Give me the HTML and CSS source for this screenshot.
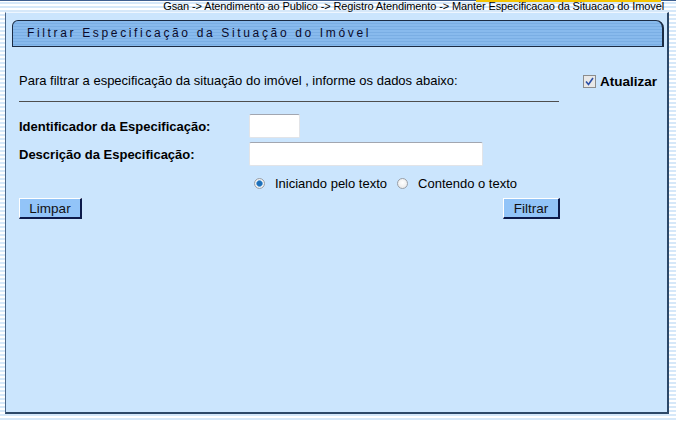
FILE: index.html
```html
<!DOCTYPE html>
<html lang="pt">
<head>
<meta charset="utf-8">
<title>Filtrar Especificação da Situação do Imóvel</title>
<link rel="stylesheet" href="styles.css">
</head>
<body>
<div class="header">
  <span class="crumb">Gsan -&gt; Atendimento ao Publico -&gt; Registro Atendimento -&gt; Manter Especificacao da Situacao do Imovel</span>
</div>
<div class="panel">
  <div class="titlebar">Filtrar Especificação da Situação do Imóvel</div>
  <div class="form">
    <div class="intro">
      <span class="intro-text">Para filtrar a especificação da situação do imóvel , informe os dados abaixo:</span>
      <label class="update">
        <span class="check">
          <svg width="9" height="9" viewBox="0 0 9 9"><path d="M1 4.5 L3.5 7.5 L8 1" fill="none" stroke="#2a4fa8" stroke-width="1.6"/></svg>
        </span>
        Atualizar
      </label>
    </div>
    <div class="rule"></div>
    <div class="fields">
      <label class="lbl">Identificador da Especificação:</label>
      <input class="inp inp-short" type="text">
      <label class="lbl">Descrição da Especificação:</label>
      <input class="inp inp-long" type="text">
      <span></span>
      <div class="radios">
        <span class="radio on"></span><span class="rtext">Iniciando pelo texto</span>
        <span class="radio"></span><span class="rtext">Contendo o texto</span>
      </div>
    </div>
    <div class="buttons">
      <button class="btn">Limpar</button>
      <button class="btn">Filtrar</button>
    </div>
  </div>
</div>
</body>
</html>
```

FILE: styles.css
```css
html, body {
  margin: 0;
  padding: 0;
}
body {
  width: 676px;
  height: 421px;
  overflow: hidden;
  font-family: "Liberation Sans", Arial, sans-serif;
  color: #000;
  background: repeating-linear-gradient(to bottom, #ffffff 0px, #ffffff 2px, #d6e8f9 2px, #d6e8f9 4px);
}
.header {
  position: relative;
  height: 12px;
  border-top: 1px solid #3f5f8f;
  box-sizing: border-box;
  display: flex;
  justify-content: flex-end;
  padding-right: 12px;
}
.header::after {
  content: "";
  position: absolute;
  left: 476px;
  top: -1px;
  width: 185px;
  height: 2px;
  background: #f5c400;
}
.crumb {
  font-size: 11px;
  letter-spacing: -0.12px;
  line-height: 10px;
  color: #000;
  white-space: nowrap;
  position: relative;
  z-index: 1;
}
.panel {
  margin-left: 5px;
  width: 664px;
  height: 402px;
  box-sizing: border-box;
  background: #cbe5fd;
  border-top: 1px solid #eef6ff;
  border-left: 1px solid #4a6688;
  border-right: 2px solid #2d4868;
  border-bottom: 2px solid #2d4868;
  padding: 7px 4px 0 6px;
}
.titlebar {
  width: 652px;
  height: 27px;
  box-sizing: border-box;
  border: 1px solid #1c2c44;
  border-right: 2px solid #1c2c44;
  border-radius: 6px 8px 0 0;
  background: repeating-linear-gradient(to bottom, #88baed 0px, #88baed 2px, #7aaee4 2px, #7aaee4 3px);
  font-size: 12px;
  letter-spacing: 2.65px;
  color: #0a0a2a;
  padding-left: 14px;
  line-height: 25px;
  white-space: nowrap;
}
.form {
  padding: 0 0 0 7px;
  width: 638px;
}
.intro {
  margin-top: 26px;
  display: flex;
  justify-content: space-between;
  align-items: center;
  height: 14px;
  font-size: 13px;
}
.update {
  display: flex;
  align-items: center;
  font-weight: bold;
  font-size: 13.5px;
  margin-top: 3px;
}
.check {
  width: 11px;
  height: 11px;
  border: 1px solid #8c8c8c;
  background: #e8e8e8;
  margin-right: 4px;
  display: flex;
  align-items: center;
  justify-content: center;
}
.rule {
  margin-top: 14px;
  width: 540px;
  height: 1px;
  background: #4e4e4e;
}
.fields {
  margin-top: 12px;
  display: grid;
  grid-template-columns: 230px auto;
  row-gap: 4px;
  align-items: center;
  justify-items: start;
  font-size: 13px;
}
.lbl {
  font-weight: bold;
}
.inp {
  height: 24px;
  box-sizing: border-box;
  border: 1px solid #e2e4e8;
  border-top-color: #a2a6b0;
  border-radius: 2px;
  background: #fff;
  padding: 0;
  margin: 0;
}
.inp-short { width: 51px; }
.inp-long { width: 234px; }
.radios {
  display: flex;
  align-items: center;
  margin-top: 6px;
  padding-left: 5px;
}
.radio {
  width: 11px;
  height: 11px;
  box-sizing: border-box;
  border-radius: 50%;
  border: 1px solid #9aa0a8;
  background: radial-gradient(circle at 50% 40%, #ffffff 0%, #e4e4e4 100%);
}
.radio.on {
  background: radial-gradient(circle at 50% 50%, #1d6fb8 0px, #1d6fb8 2.2px, #6aa8de 3px, #f2f2f2 3.6px, #dcdcdc 100%);
}
.rtext {
  margin-left: 10px;
  margin-right: 10px;
}
.buttons {
  margin-top: 7px;
  width: 541px;
  display: flex;
  justify-content: space-between;
}
.btn {
  font-family: "Liberation Sans", Arial, sans-serif;
  font-size: 13.5px;
  color: #111;
  background: #92c4f8;
  border: 2px solid;
  border-color: #ffffff #0c1a4a #0c1a4a #ffffff;
  border-width: 1px 2px 2px 1px;
  height: 21px;
  padding: 0 6px;
  margin: 0;
  line-height: 17px;
}
.btn:first-child { width: 63px; }
.btn:last-child { width: 57px; }
```
